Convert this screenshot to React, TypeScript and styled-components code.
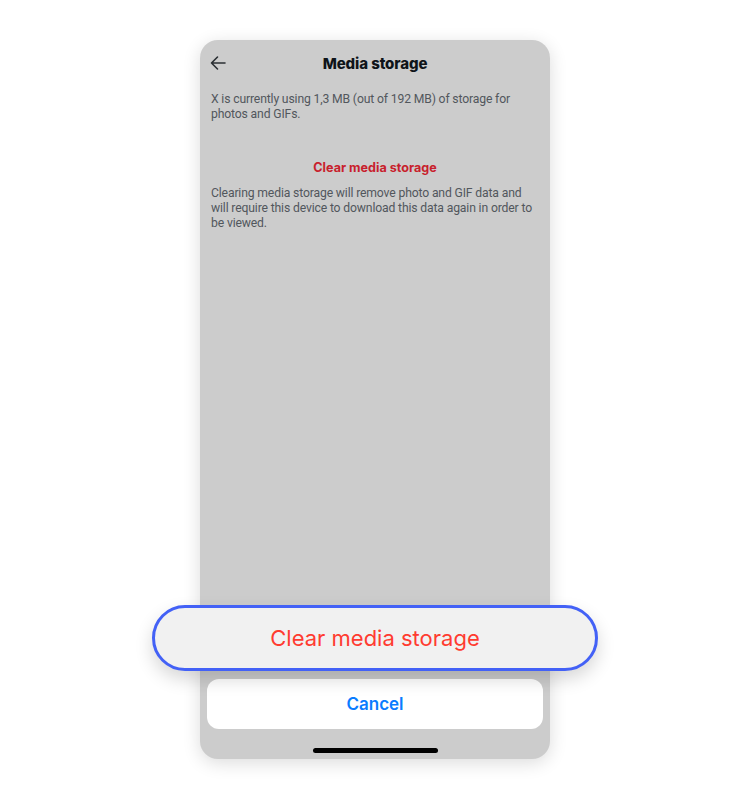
import React from "react";
import styled, { createGlobalStyle } from "styled-components";

const Global = createGlobalStyle`
  html, body { margin: 0; padding: 0; background: #ffffff; }
  body { font-family: Inter, "Noto Sans", sans-serif; -webkit-font-smoothing: antialiased; }
`;

const Page = styled.div`
  width: 750px;
  height: 800px;
  display: flex;
  justify-content: center;
  padding-top: 40px;
  box-sizing: border-box;
`;

const Phone = styled.div`
  position: relative;
  width: 350px;
  height: 719px;
  background: #cccccc;
  border-radius: 18px;
  box-shadow: 0 4px 18px rgba(0, 0, 0, 0.14);
  display: flex;
  flex-direction: column;
`;

const Header = styled.div`
  height: 46px;
  display: flex;
  align-items: center;
  justify-content: center;
  position: relative;
`;

const BackButton = styled.div`
  position: absolute;
  left: 9px;
  top: 14px;
  width: 18px;
  height: 18px;
  display: flex;
`;

const Title = styled.div`
  font-size: 15px;
  font-weight: 800;
  color: #0f1419;
  letter-spacing: -0.1px;
`;

const Content = styled.div`
  flex: 1;
  padding: 0 11px;
  display: flex;
  flex-direction: column;
`;

const Para = styled.p<{ $top: number }>`
  margin: ${(p) => p.$top}px 0 0;
  font-family: Roboto, "Noto Sans", sans-serif;
  font-size: 12.2px;
  letter-spacing: -0.15px;
  line-height: 15px;
  color: #52575d;
`;

const RedLink = styled.div`
  margin-top: 38px;
  text-align: center;
  font-size: 12.6px;
  font-weight: 700;
  color: #c81f2d;
  line-height: 16px;
`;

const Sheet = styled.div`
  padding: 0 7px;
  display: flex;
  flex-direction: column;
  align-items: stretch;
`;

const CancelButton = styled.div`
  height: 50px;
  background: #ffffff;
  border-radius: 12px;
  display: flex;
  align-items: center;
  justify-content: center;
  font-size: 17px;
  font-weight: 600;
  color: #0a7cff;
`;

const HomeBar = styled.div`
  align-self: center;
  width: 125px;
  height: 5px;
  border-radius: 3px;
  background: #000000;
  margin: 19px 0 6px;
`;

const Magnified = styled.div`
  position: absolute;
  left: -48px;
  top: 565px;
  width: 446px;
  height: 66px;
  box-sizing: border-box;
  border: 3px solid #4361f6;
  border-radius: 33px;
  background: #f1f1f1;
  box-shadow: 0 8px 18px rgba(0, 0, 0, 0.16);
  display: flex;
  align-items: center;
  justify-content: center;
  font-size: 22px;
  font-weight: 400;
  color: #ff3b30;
`;

export default function App() {
  return (
    <>
      <Global />
      <Page>
        <Phone>
          <Header>
            <BackButton>
              <svg width="18" height="18" viewBox="0 0 18 18" fill="none">
                <path
                  d="M16 9H2.5M8.5 3L2.5 9l6 6"
                  stroke="#2b2f33"
                  strokeWidth="1.6"
                  strokeLinecap="round"
                  strokeLinejoin="round"
                />
              </svg>
            </BackButton>
            <Title>Media storage</Title>
          </Header>
          <Content>
            <Para $top={6}>
              X is currently using 1,3 MB (out of 192 MB) of storage for photos and GIFs.
            </Para>
            <RedLink>Clear media storage</RedLink>
            <Para $top={10}>
              Clearing media storage will remove photo and GIF data and will require this
              device to download this data again in order to be viewed.
            </Para>
          </Content>
          <Sheet>
            <CancelButton>Cancel</CancelButton>
            <HomeBar />
          </Sheet>
          <Magnified>Clear media storage</Magnified>
        </Phone>
      </Page>
    </>
  );
}
